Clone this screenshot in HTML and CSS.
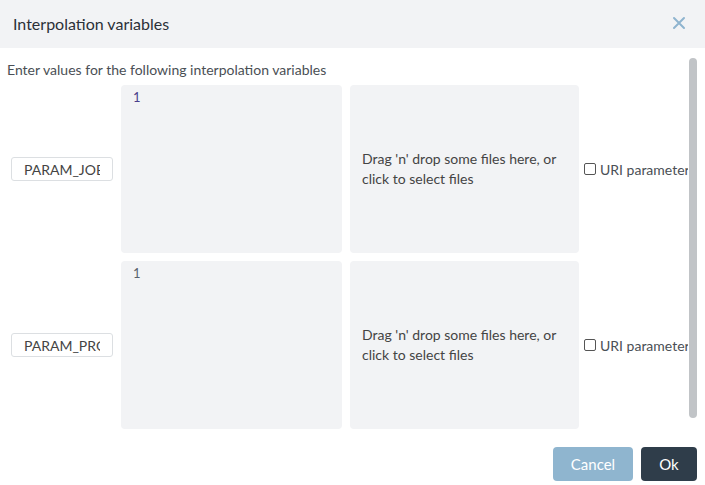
FILE: index.html
```html
<!DOCTYPE html>
<html>
<head>
<meta charset="utf-8">
<link rel="stylesheet" href="styles.css">
</head>
<body>
<div class="dialog">
  <div class="header">
    <div class="title">Interpolation variables</div>
    <svg class="close" width="14" height="14" viewBox="0 0 14 14"><path d="M2 2 L12 12 M12 2 L2 12" stroke="#8fb4cf" stroke-width="2" stroke-linecap="round"/></svg>
  </div>
  <div class="body">
    <div class="scroll">
      <div class="intro">Enter values for the following interpolation variables</div>
      <div class="row">
        <div class="name"><span>PARAM_JOB</span></div>
        <div class="editor"><span class="num first">1</span></div>
        <div class="drop">Drag 'n' drop some files here, or click to select files</div>
        <label class="uri"><span class="box"></span><span class="uri-text">URI parameter</span></label>
      </div>
      <div class="row">
        <div class="name"><span>PARAM_PROJECT</span></div>
        <div class="editor"><span class="num">1</span></div>
        <div class="drop">Drag 'n' drop some files here, or click to select files</div>
        <label class="uri"><span class="box"></span><span class="uri-text">URI parameter</span></label>
      </div>
    </div>
    <div class="thumb"></div>
  </div>
  <div class="footer">
    <button class="btn cancel">Cancel</button>
    <button class="btn ok">Ok</button>
  </div>
</div>
</body>
</html>
```
FILE: styles.css
```css
html, body {
  margin: 0;
  padding: 0;
  background: #fff;
}
body {
  font-family: "Lato", "Open Sans", sans-serif;
  color: #444;
}
.dialog {
  width: 705px;
  height: 485px;
  display: flex;
  flex-direction: column;
  overflow: hidden;
}
.header {
  height: 48px;
  flex: none;
  background: #f2f3f5;
  display: flex;
  align-items: center;
  justify-content: space-between;
  padding: 0 19px 0 13px;
  box-sizing: border-box;
}
.title {
  font-size: 16px;
  color: #2b3038;
  padding-bottom: 2px;
}
.close {
  display: block;
  margin-bottom: 2px;
}
.body {
  position: relative;
  height: 391px;
  flex: none;
}
.scroll {
  width: 688px;
  height: 100%;
  overflow: hidden;
  padding: 13px 0 0 7px;
  box-sizing: border-box;
}
.intro {
  font-size: 14px;
  color: #4a4f55;
  line-height: 17px;
  height: 24px;
}
.row {
  display: flex;
  align-items: center;
  margin-bottom: 8px;
}
.name {
  width: 102px;
  height: 24px;
  box-sizing: border-box;
  margin-left: 4px;
  border: 1px solid #dcdfe2;
  border-radius: 3px;
  font-size: 14px;
  color: #444;
  padding: 0 12px;
  display: flex;
  align-items: center;
  overflow: hidden;
  white-space: nowrap;
  flex: none;
}
.name span {
  display: block;
  overflow: hidden;
  width: 100%;
}
.editor {
  width: 221px;
  height: 168px;
  margin-left: 8px;
  background: #f2f3f5;
  border-radius: 4px;
  flex: none;
  box-sizing: border-box;
  padding: 4px 12px;
  font-size: 13px;
  line-height: 16px;
}
.num {
  color: #58616c;
}
.num.first {
  color: #4a3f8c;
}
.drop {
  width: 229px;
  height: 168px;
  margin-left: 8px;
  background: #f2f3f5;
  border-radius: 4px;
  flex: none;
  box-sizing: border-box;
  padding: 0 12px;
  font-size: 14px;
  line-height: 20px;
  color: #444;
  display: flex;
  align-items: center;
}
.uri {
  display: flex;
  align-items: center;
  margin-left: 5px;
  font-size: 14px;
  color: #4a4f55;
  white-space: nowrap;
  flex: none;
}
.box {
  width: 12px;
  height: 12px;
  box-sizing: border-box;
  border: 1.5px solid #555;
  border-radius: 2px;
  margin-right: 4px;
}
.thumb {
  position: absolute;
  left: 689px;
  top: 10px;
  width: 8px;
  height: 360px;
  background: #c1c4c7;
  border-radius: 4px;
}
.footer {
  flex: 1;
  display: flex;
  justify-content: flex-end;
  align-items: flex-start;
  gap: 8px;
  padding: 8px 8px 0 0;
}
.btn {
  height: 34px;
  border: none;
  border-radius: 4px;
  color: #fff;
  font-family: "Lato", "Open Sans", sans-serif;
  font-size: 15px;
  padding: 0;
}
.cancel {
  width: 80px;
  background: #8fb5cf;
}
.ok {
  width: 56px;
  background: #2f3d4a;
}
```
